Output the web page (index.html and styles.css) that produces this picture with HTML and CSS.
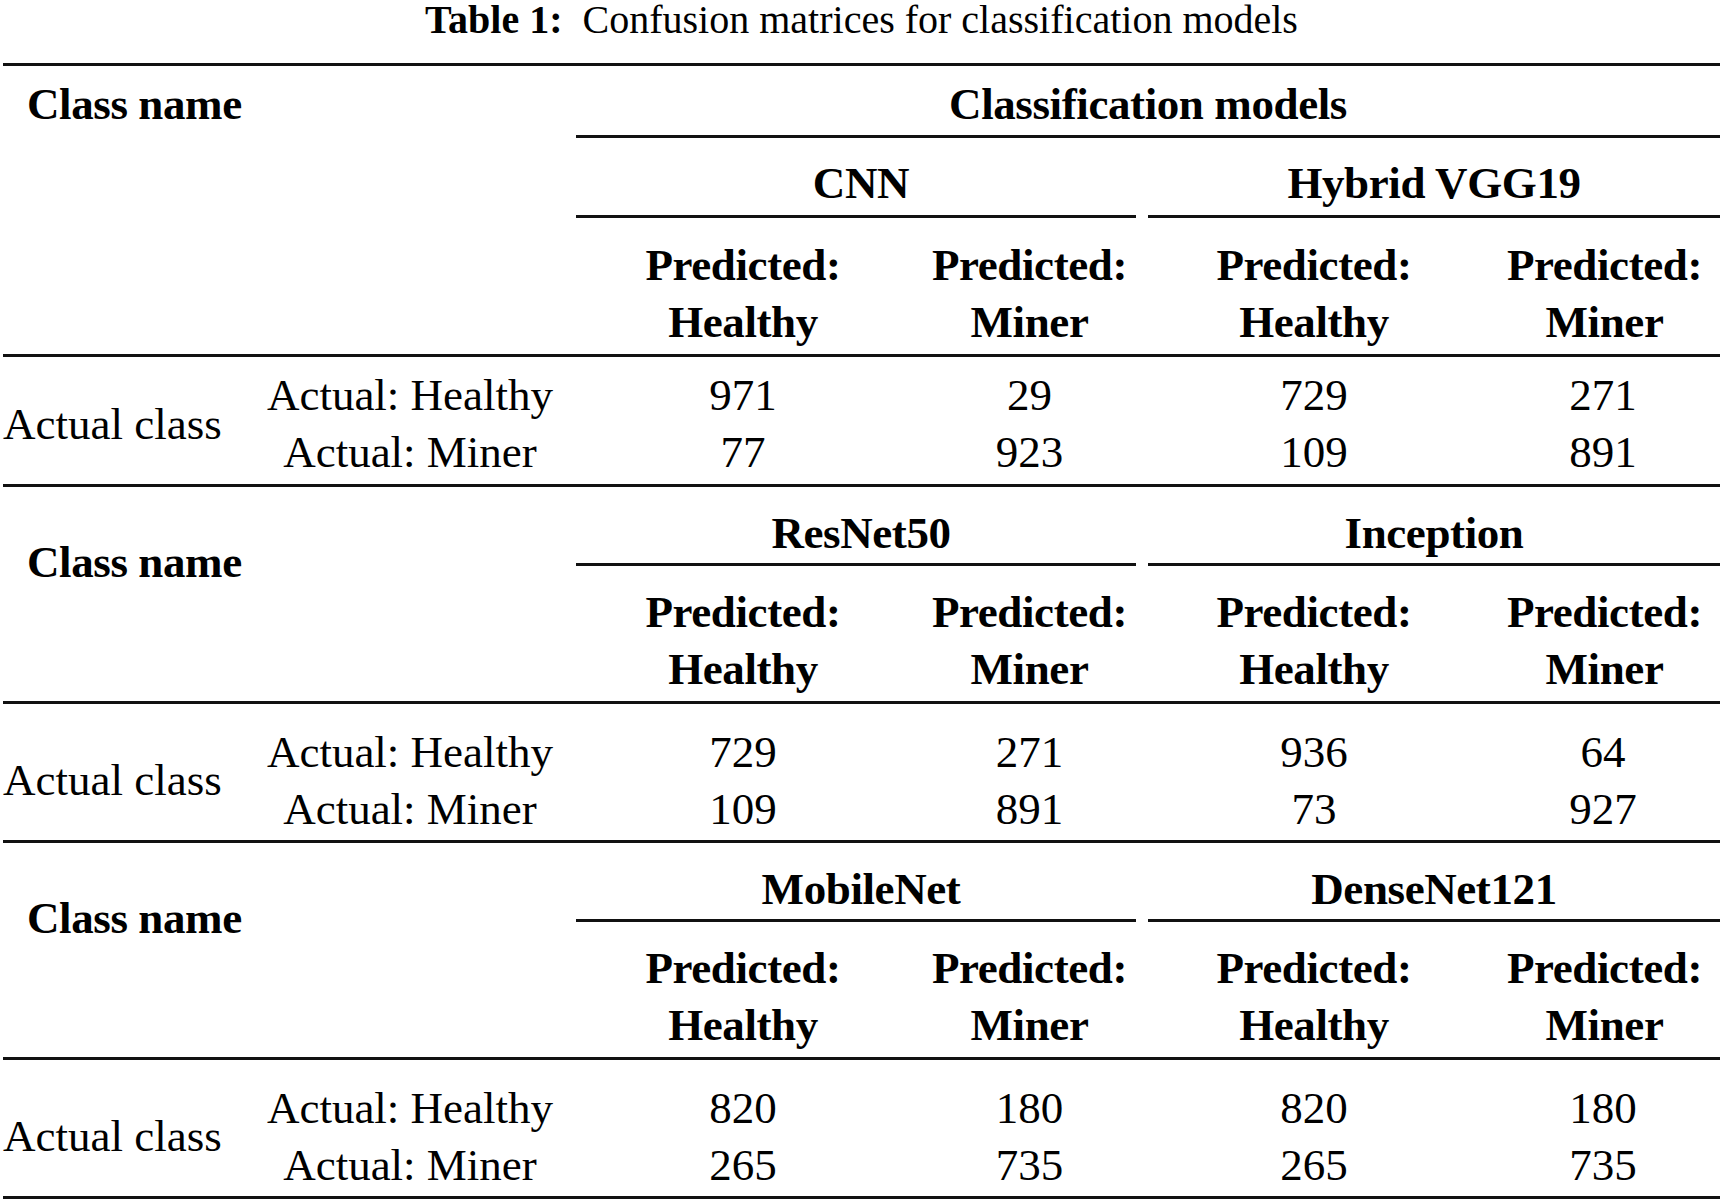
FILE: index.html
```html
<!DOCTYPE html>
<html lang="en">
<head>
<meta charset="utf-8">
<title>Table 1</title>
<link rel="stylesheet" href="styles.css">
</head>
<body>
<div class="page">
  <div class="caption"><b>Table 1:</b>&nbsp; Confusion matrices for classification models</div>

  <div class="blk blk-first">
    <div class="rl a-top"></div>
    <div class="hd a-cls cls">Class name</div>
    <div class="hd a-hd">Classification models</div>
    <div class="rl a-hr"></div>
    <div class="hd a-mod1 mod">CNN</div>
    <div class="hd a-mod2 mod">Hybrid VGG19</div>
    <div class="rl a-cm1 cm1"></div>
    <div class="rl a-cm2 cm2"></div>
    <div class="hd a-p1 pred">Predicted:<br>Healthy</div>
    <div class="hd a-p2 pred">Predicted:<br>Miner</div>
    <div class="hd a-p3 pred">Predicted:<br>Healthy</div>
    <div class="hd a-p4 pred">Predicted:<br>Miner</div>
    <div class="rl a-rule"></div>
    <div class="a-act act">Actual class</div>
    <div class="a-lab num">Actual: Healthy<br>Actual: Miner</div>
    <div class="a-d1 num">971<br>77</div>
    <div class="a-d2 num">29<br>923</div>
    <div class="a-d3 num">729<br>109</div>
    <div class="a-d4 num">271<br>891</div>
    <div class="rl a-bot"></div>
  </div>

  <div class="blk">
    <div class="hd a-cls cls">Class name</div>
    <div class="hd a-mod1 mod">ResNet50</div>
    <div class="hd a-mod2 mod">Inception</div>
    <div class="rl a-cm1 cm1"></div>
    <div class="rl a-cm2 cm2"></div>
    <div class="hd a-p1 pred">Predicted:<br>Healthy</div>
    <div class="hd a-p2 pred">Predicted:<br>Miner</div>
    <div class="hd a-p3 pred">Predicted:<br>Healthy</div>
    <div class="hd a-p4 pred">Predicted:<br>Miner</div>
    <div class="rl a-rule"></div>
    <div class="a-act act">Actual class</div>
    <div class="a-lab num">Actual: Healthy<br>Actual: Miner</div>
    <div class="a-d1 num">729<br>109</div>
    <div class="a-d2 num">271<br>891</div>
    <div class="a-d3 num">936<br>73</div>
    <div class="a-d4 num">64<br>927</div>
    <div class="rl a-bot"></div>
  </div>

  <div class="blk">
    <div class="hd a-cls cls">Class name</div>
    <div class="hd a-mod1 mod">MobileNet</div>
    <div class="hd a-mod2 mod">DenseNet121</div>
    <div class="rl a-cm1 cm1"></div>
    <div class="rl a-cm2 cm2"></div>
    <div class="hd a-p1 pred">Predicted:<br>Healthy</div>
    <div class="hd a-p2 pred">Predicted:<br>Miner</div>
    <div class="hd a-p3 pred">Predicted:<br>Healthy</div>
    <div class="hd a-p4 pred">Predicted:<br>Miner</div>
    <div class="rl a-rule"></div>
    <div class="a-act act">Actual class</div>
    <div class="a-lab num">Actual: Healthy<br>Actual: Miner</div>
    <div class="a-d1 num">820<br>265</div>
    <div class="a-d2 num">180<br>735</div>
    <div class="a-d3 num">820<br>265</div>
    <div class="a-d4 num">180<br>735</div>
    <div class="rl a-bot"></div>
  </div>
</div>
</body>
</html>
```

FILE: styles.css
```css
html, body {
  margin: 0;
  padding: 0;
  background: #ffffff;
}

body {
  font-family: "Liberation Serif", "Times New Roman", serif;
  color: #000000;
}

.page {
  width: 1717px;
  margin-left: 3px;
}

.caption {
  height: 63px;
  font-size: 40px;
  line-height: 40px;
  text-align: center;
  white-space: nowrap;
}

.caption b {
  font-weight: 700;
}

.blk {
  display: grid;
  grid-template-columns: 241px 332px 334px 232px 344px 234px;
  grid-template-rows: 76px 3px 135px 3px 136px 3px;
  grid-template-areas:
    "cls cls mod1 mod1 mod2 mod2"
    "cls cls cm1 cm1 cm2 cm2"
    "cls cls p1 p2 p3 p4"
    "rule rule rule rule rule rule"
    "act lab d1 d2 d3 d4"
    "bot bot bot bot bot bot";
  font-size: 45px;
  line-height: 57px;
}

.blk-first {
  grid-template-rows: 3px 69px 3px 77px 3px 136px 3px 127px 3px;
  grid-template-areas:
    "top top top top top top"
    "cls cls hd hd hd hd"
    ". . hr hr hr hr"
    ". . mod1 mod1 mod2 mod2"
    ". . cm1 cm1 cm2 cm2"
    ". . p1 p2 p3 p4"
    "rule rule rule rule rule rule"
    "act lab d1 d2 d3 d4"
    "bot bot bot bot bot bot";
}

.a-top { grid-area: top; }
.a-cls { grid-area: cls; }
.a-hd { grid-area: hd; }
.a-hr { grid-area: hr; }
.a-mod1 { grid-area: mod1; }
.a-mod2 { grid-area: mod2; }
.a-cm1 { grid-area: cm1; }
.a-cm2 { grid-area: cm2; }
.a-p1 { grid-area: p1; }
.a-p2 { grid-area: p2; padding-left: 7px; }
.a-p3 { grid-area: p3; }
.a-p4 { grid-area: p4; padding-left: 3px; }
.a-rule { grid-area: rule; }
.a-act { grid-area: act; }
.a-lab { grid-area: lab; }
.a-d1 { grid-area: d1; }
.a-d2 { grid-area: d2; padding-left: 7px; }
.a-d3 { grid-area: d3; }
.a-d4 { grid-area: d4; }
.a-bot { grid-area: bot; }

.rl {
  background: #111111;
  height: 3px;
}

.cm1 { margin-right: 6px; }
.cm2 { margin-left: 6px; }

.hd {
  font-weight: 700;
  text-align: center;
  white-space: nowrap;
  letter-spacing: -0.4px;
}

.cls {
  text-align: left;
  padding-left: 24px;
  padding-top: 46.5px;
}

.blk-first .cls {
  padding-top: 9.5px;
}

.a-hd {
  padding-top: 9.5px;
}

.mod {
  padding-top: 17.5px;
}

.a-mod1 { padding-left: 4px; }
.a-mod2 { padding-left: 6px; }

.blk-first .mod {
  padding-top: 16.5px;
}

.pred {
  padding-top: 17.5px;
}

.blk-first .pred {
  padding-top: 18.5px;
}

.act {
  white-space: nowrap;
  padding-top: 47.5px;
}

.blk-first .act {
  padding-top: 38.5px;
}

.num {
  text-align: center;
  white-space: nowrap;
  padding-top: 19.5px;
}

.blk-first .num {
  padding-top: 9.5px;
}
```
